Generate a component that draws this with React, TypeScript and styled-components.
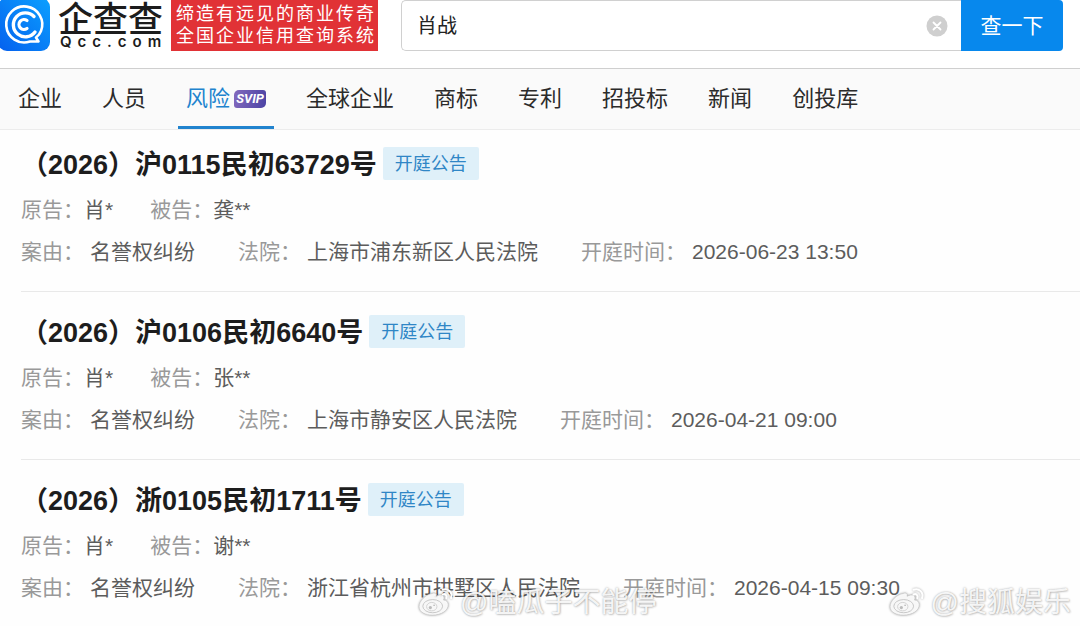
import React, { useState } from "react";
import styled, { createGlobalStyle } from "styled-components";

const GlobalStyle = createGlobalStyle`
  *, *::before, *::after { box-sizing: border-box; }
  body {
    margin: 0;
    background: #fefefe;
    color: #222;
    font-family: "Liberation Sans", "Noto Sans CJK SC", sans-serif;
  }
  button, input { font-family: inherit; }
`;

const Page = styled.div`
  position: relative;
  overflow: hidden;
`;

const Header = styled.header`
  display: flex;
  align-items: flex-start;
  height: 69px;
  padding-right: 17px;
  border-bottom: 1px solid #cfcfcf;
  box-shadow: 0 1px 2px rgba(0, 0, 0, 0.06);
  background: #fff;
`;

const Brand = styled.a`
  display: flex;
  flex: none;
  color: #1c1c1c;
  text-decoration: none;
`;

const BrandIcon = styled.svg`
  display: block;
  width: 50px;
  height: 51px;
`;

const BrandText = styled.span`
  display: flex;
  flex-direction: column;
  width: 105px;
  margin: 0 8px;
`;

const BrandName = styled.span`
  font: 500 35px/34px "Noto Sans CJK SC", sans-serif;
  white-space: nowrap;
`;

const BrandDomain = styled.span`
  padding-left: 2px;
  font: 600 15px/16px Inter, sans-serif;
  letter-spacing: 6px;
  white-space: nowrap;
`;

const Slogan = styled.p`
  flex: none;
  width: 207px;
  height: 51px;
  margin: 0;
  padding: 1px 0 0 5px;
  background: #e13236;
  color: #fff;
  font: 400 18px/22px "Noto Sans CJK SC", sans-serif;
  letter-spacing: 2px;
  white-space: nowrap;
`;

const SearchForm = styled.form`
  display: flex;
  flex: 1;
  min-width: 0;
  height: 51px;
  margin-left: 23px;
`;

const SearchField = styled.div`
  display: flex;
  flex: 1;
  min-width: 0;
  align-items: center;
  padding: 0 13px 0 15px;
  border: 1px solid #d0d0d0;
  border-right: 0;
  border-radius: 5px 0 0 5px;
`;

const SearchInput = styled.input`
  flex: 1;
  min-width: 0;
  padding: 0;
  border: 0;
  outline: 0;
  background: transparent;
  color: #222;
  font-size: 20px;
  line-height: 30px;
`;

const ClearButton = styled.button`
  display: flex;
  width: 22px;
  height: 22px;
  padding: 0;
  border: 0;
  background: none;
  cursor: pointer;
`;

const SearchButton = styled.button`
  flex: none;
  width: 102px;
  padding: 0 0 4px;
  border: 0;
  border-radius: 0 4px 4px 0;
  background: #0788ed;
  color: #fff;
  font-size: 21px;
  cursor: pointer;
`;

const Tabs = styled.nav`
  display: flex;
  gap: 24px;
  height: 61px;
  padding: 0 10px;
  border-bottom: 1px solid #ececec;
  background: #fafafa;
`;

const Tab = styled.a<{ $active?: boolean }>`
  display: flex;
  flex: none;
  align-items: center;
  gap: 4px;
  padding: 2px 8px 0;
  border-bottom: 3px solid ${(p) => (p.$active ? "#2183ce" : "transparent")};
  color: ${(p) => (p.$active ? "#2183ce" : "#2b2b2b")};
  font-size: 22px;
  line-height: 32px;
  text-decoration: none;
`;

const VipBadge = styled.span`
  width: 32px;
  height: 18px;
  border-radius: 5px 3px;
  background: linear-gradient(100deg, #8369bd, #4b43a4);
  color: #fff;
  font: italic 700 13px/18px Roboto, sans-serif;
  text-align: center;
`;

const CaseList = styled.main`
  padding: 17px 0 0 21px;
`;

const Case = styled.article`
  margin-bottom: 23px;
  padding-bottom: 18px;
  border-bottom: 1px solid #e9e9e9;

  &:last-child {
    margin-bottom: 0;
    border-bottom: 0;
  }
`;

const CaseHead = styled.div`
  display: flex;
  align-items: center;
  gap: 6px;
  height: 33px;
  margin-bottom: 9px;
`;

const CaseTitle = styled.h2`
  margin: 0;
  padding-top: 3px;
  color: #1d1d1d;
  font-size: 27px;
  font-weight: 700;
  line-height: 33px;
  white-space: nowrap;
`;

const Tag = styled.span`
  flex: none;
  height: 33px;
  padding: 0 12px;
  border-radius: 2px;
  background: #dff0f9;
  color: #2f86c6;
  font-size: 18px;
  line-height: 34px;
`;

const Facts = styled.dl<{ $gap: number }>`
  display: flex;
  gap: ${(p) => p.$gap}px;
  margin: 0;
  font-size: 21px;
  line-height: 42px;
  white-space: nowrap;
`;

const Fact = styled.div<{ $gap?: number }>`
  display: flex;
  gap: ${(p) => p.$gap ?? 0}px;
`;

const Term = styled.dt`
  color: #999;
`;

const Detail = styled.dd`
  margin: 0;
  color: #5c5c5c;
`;

const Watermark = styled.div<{ $left?: string; $right?: string }>`
  position: absolute;
  bottom: 0;
  left: ${(p) => p.$left ?? "auto"};
  right: ${(p) => p.$right ?? "auto"};
  display: flex;
  align-items: center;
  gap: 6px;
  color: rgba(255, 255, 255, 0.9);
  font-size: 28px;
  line-height: 48px;
  text-shadow: 0 0 2px rgba(0, 0, 0, 0.35), 1px 1px 2px rgba(0, 0, 0, 0.15);
  white-space: nowrap;
  pointer-events: none;
`;

const WatermarkIcon = styled.svg`
  width: 36px;
  height: 32px;
  margin-bottom: 4px;
  filter: drop-shadow(0 0 1px rgba(0, 0, 0, 0.35));
`;

const QccIcon = () => (
  <BrandIcon viewBox="0 0 50 51" aria-hidden="true">
    <defs>
      <linearGradient id="qcc" x1="0" y1="1" x2="1" y2="0">
        <stop offset="0" stopColor="#0560ee" />
        <stop offset="1" stopColor="#0ba0ff" />
      </linearGradient>
    </defs>
    <rect x="-2" y="-2" width="52" height="53" rx="9" fill="url(#qcc)" />
    <g fill="none" stroke="#fff" strokeLinecap="round" strokeLinejoin="round">
      <path d="M30 41.500A18 18 0 1 1 41 31Q39.500 35 36 37.500L38.500 41.500H31" strokeWidth="2.600" />
      <path d="M34 16.500A12 12 0 1 0 35 32" strokeWidth="3.400" />
      <path d="M27 20.500A5 5 0 1 0 27 28.500" strokeWidth="3.200" />
    </g>
  </BrandIcon>
);

const WeiboMark = () => (
  <WatermarkIcon viewBox="0 0 38 34" aria-hidden="true">
    <path
      d="M15 9C8 10 1 17 1 23c0 6 7 9 14 9 10 0 17-5 17-11 0-3-2-5-5-5 2-5-2-7-8-4 1-3-1-4-4-3Z"
      fill="#fff"
      fillOpacity="0.9"
      stroke="#c4c4c4"
      strokeWidth="0.700"
    />
    <ellipse cx="15.500" cy="22.500" rx="10.500" ry="7" fill="none" stroke="#c4c4c4" />
    <ellipse cx="14.500" cy="23" rx="5.500" ry="4.500" fill="none" stroke="#d0d0d0" />
    <circle cx="13" cy="24" r="1.700" fill="#bbb" />
    <circle cx="17" cy="21.500" r="0.900" fill="#bbb" />
    <path d="M26 5c6-2 11 3 9 9M26 10c3-1 5 1 4 4" fill="none" stroke="#fff" strokeWidth="2.200" strokeLinecap="round" />
  </WatermarkIcon>
);

const tabs = ["企业", "人员", "风险", "全球企业", "商标", "专利", "招投标", "新闻", "创投库"];

const cases = [
  { no: "（2026）沪0115民初63729号", plaintiff: "肖*", defendant: "龚**", court: "上海市浦东新区人民法院", time: "2026-06-23 13:50" },
  { no: "（2026）沪0106民初6640号", plaintiff: "肖*", defendant: "张**", court: "上海市静安区人民法院", time: "2026-04-21 09:00" },
  { no: "（2026）浙0105民初1711号", plaintiff: "肖*", defendant: "谢**", court: "浙江省杭州市拱墅区人民法院", time: "2026-04-15 09:30" },
];

export default function App() {
  const [keyword, setKeyword] = useState("肖战");

  return (
    <Page>
      <GlobalStyle />
      <Header>
        <Brand href="#">
          <QccIcon />
          <BrandText>
            <BrandName>企查查</BrandName>
            <BrandDomain>Qcc.com</BrandDomain>
          </BrandText>
        </Brand>
        <Slogan>
          缔造有远见的商业传奇
          <br />
          全国企业信用查询系统
        </Slogan>
        <SearchForm role="search" onSubmit={(e) => e.preventDefault()}>
          <SearchField>
            <SearchInput aria-label="搜索" value={keyword} onChange={(e) => setKeyword(e.target.value)} />
            <ClearButton type="button" aria-label="清空" onClick={() => setKeyword("")}>
              <svg width="22" height="22" viewBox="0 0 22 22" aria-hidden="true">
                <circle cx="11" cy="11" r="10.500" fill="#cfcfcf" />
                <path d="M7.500 7.500l7 7M14.500 7.500l-7 7" stroke="#fff" strokeWidth="1.800" strokeLinecap="round" />
              </svg>
            </ClearButton>
          </SearchField>
          <SearchButton type="submit">查一下</SearchButton>
        </SearchForm>
      </Header>

      <Tabs>
        {tabs.map((name) => (
          <Tab key={name} href="#" $active={name === "风险"}>
            {name}
            {name === "风险" && <VipBadge>SVIP</VipBadge>}
          </Tab>
        ))}
      </Tabs>

      <CaseList>
        {cases.map((c) => (
          <Case key={c.no}>
            <CaseHead>
              <CaseTitle>{c.no}</CaseTitle>
              <Tag>开庭公告</Tag>
            </CaseHead>
            <Facts $gap={37}>
              <Fact>
                <Term>原告：</Term>
                <Detail>{c.plaintiff}</Detail>
              </Fact>
              <Fact>
                <Term>被告：</Term>
                <Detail>{c.defendant}</Detail>
              </Fact>
            </Facts>
            <Facts $gap={43}>
              <Fact $gap={6}>
                <Term>案由：</Term>
                <Detail>名誉权纠纷</Detail>
              </Fact>
              <Fact $gap={6}>
                <Term>法院：</Term>
                <Detail>{c.court}</Detail>
              </Fact>
              <Fact $gap={6}>
                <Term>开庭时间：</Term>
                <Detail>{c.time}</Detail>
              </Fact>
            </Facts>
          </Case>
        ))}
      </CaseList>

      <Watermark $left="418px">
        <WeiboMark />
        @嗑瓜子不能停
      </Watermark>
      <Watermark $right="9px">
        <WeiboMark />
        @搜狐娱乐
      </Watermark>
    </Page>
  );
}
